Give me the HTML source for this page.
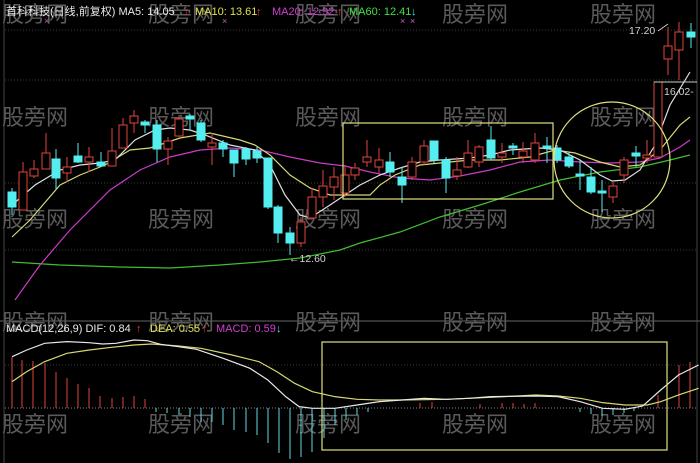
<!DOCTYPE html>
<html><head><meta charset="utf-8"><style>
html,body{margin:0;padding:0;background:#000;width:700px;height:463px;overflow:hidden}
svg{display:block}
text{font-family:"Liberation Sans","Noto Sans CJK SC",sans-serif}
.wm{fill:#5a5a5a;font-size:22px;font-family:"Noto Sans CJK SC","WenQuanYi Zen Hei",sans-serif}
.r{stroke:#e5433b;fill:#000;stroke-width:1}
.c{stroke:#55eef0;fill:#55eef0;stroke-width:1}
</style></head><body>
<svg width="700" height="463" viewBox="0 0 700 463" xmlns="http://www.w3.org/2000/svg">
<rect width="700" height="463" fill="#000"/>
<!-- grid -->
<g stroke="#3a3a3a" stroke-dasharray="1,2" stroke-width="1">
<line x1="5" y1="30" x2="697" y2="30"/><line x1="5" y1="80" x2="697" y2="80"/>
<line x1="5" y1="183" x2="697" y2="183"/><line x1="5" y1="250" x2="697" y2="250"/>
<line x1="5" y1="365" x2="697" y2="365"/>
</g>
<line x1="0" y1="321" x2="700" y2="321" stroke="#666"/>
<line x1="4" y1="0" x2="4" y2="463" stroke="#444"/>
<line x1="697" y1="0" x2="697" y2="463" stroke="#444"/>
<line x1="5" y1="408" x2="697" y2="408" stroke="#888" stroke-dasharray="1,2"/>
<!-- watermarks -->
<g class="wm">
<text x="2" y="22">股旁网</text><text x="148" y="22">股旁网</text><text x="295" y="22">股旁网</text><text x="442" y="22">股旁网</text><text x="590" y="22">股旁网</text>
<text x="2" y="125">股旁网</text><text x="148" y="125">股旁网</text><text x="295" y="125">股旁网</text><text x="442" y="125">股旁网</text><text x="590" y="125">股旁网</text>
<text x="2" y="227">股旁网</text><text x="148" y="227">股旁网</text><text x="295" y="227">股旁网</text><text x="442" y="227">股旁网</text><text x="590" y="227">股旁网</text>
<text x="2" y="330">股旁网</text><text x="148" y="330">股旁网</text><text x="295" y="330">股旁网</text><text x="442" y="330">股旁网</text><text x="590" y="330">股旁网</text>
<text x="2" y="432">股旁网</text><text x="148" y="432">股旁网</text><text x="295" y="432">股旁网</text><text x="442" y="432">股旁网</text><text x="590" y="432">股旁网</text>
</g>
<!-- MA lines -->
<g fill="none" stroke-width="1.2">
<polyline stroke="#3fbf2f" points="12,262 60,265 120,267 170,268 220,265 260,262 300,258 340,250 360,243 400,232 440,217 480,205 520,192 560,180 600,172 640,167 670,160 690,155"/>
<polyline stroke="#c83cc8" points="15,300 40,265 70,230 110,190 140,170 170,157 200,150 230,148 260,150 290,157 320,163 345,166 370,172 400,178 430,180 460,176 490,170 520,162 550,160 580,162 610,163 640,162 660,158 680,147 690,140"/>
<polyline stroke="#d8d870" points="12,237 30,220 60,185 80,175 105,165 130,150 150,148 180,138 210,133 240,140 255,145 270,155 290,175 310,188 330,195 370,195 380,185 395,175 420,165 440,163 470,160 500,160 530,157 555,150 575,153 600,162 620,167 640,165 660,150 680,125 690,117"/>
<polyline stroke="#e0e0e0" points="12,205 35,185 60,170 80,165 100,163 115,160 135,140 155,130 170,128 190,130 205,135 230,145 255,150 270,165 285,195 300,215 310,218 330,205 345,195 360,185 380,175 400,168 420,162 440,160 470,158 490,155 510,150 540,148 560,150 580,160 600,175 612,181 625,180 640,170 655,145 670,105 690,72"/>
</g>
<!-- candles -->
<g>
<line class="c" x1="12" y1="188" x2="12" y2="215"/><rect class="c" x="8" y="192" width="8" height="15"/>
<line class="r" x1="23" y1="162" x2="23" y2="210"/><rect class="r" x="19" y="172" width="8" height="38"/>
<line class="r" x1="34" y1="160" x2="34" y2="178"/><rect class="r" x="30" y="169" width="8" height="7"/>
<line class="r" x1="46" y1="133" x2="46" y2="169"/><rect class="r" x="42" y="153" width="8" height="16"/>
<line class="c" x1="56" y1="149" x2="56" y2="190"/><rect class="c" x="52" y="159" width="8" height="19"/>
<line class="r" x1="67" y1="157" x2="67" y2="182"/><rect class="r" x="63" y="167" width="8" height="6"/>
<line class="c" x1="78" y1="143" x2="78" y2="163"/><rect class="c" x="74" y="156" width="8" height="6"/>
<line class="r" x1="89" y1="147" x2="89" y2="172"/><rect class="r" x="85" y="157" width="8" height="5"/>
<line class="c" x1="101" y1="152" x2="101" y2="167"/><rect class="c" x="97" y="162" width="8" height="4"/>
<line class="r" x1="112" y1="128" x2="112" y2="166"/><rect class="r" x="108" y="151" width="8" height="15"/>
<line class="r" x1="123" y1="118" x2="123" y2="148"/><rect class="r" x="119" y="125" width="8" height="23"/>
<line class="r" x1="134" y1="110" x2="134" y2="133"/><rect class="r" x="130" y="116" width="8" height="7"/>
<line class="c" x1="145" y1="120" x2="145" y2="133"/><rect class="c" x="141" y="122" width="8" height="3"/>
<line class="c" x1="157" y1="120" x2="157" y2="162"/><rect class="c" x="153" y="125" width="8" height="24"/>
<line class="r" x1="168" y1="137" x2="168" y2="165"/><rect class="r" x="164" y="141" width="8" height="8"/>
<line class="r" x1="179" y1="115" x2="179" y2="137"/><rect class="r" x="175" y="119" width="8" height="17"/>
<line class="c" x1="190" y1="114" x2="190" y2="130"/><rect class="c" x="186" y="116" width="8" height="3"/>
<line class="c" x1="201" y1="120" x2="201" y2="142"/><rect class="c" x="197" y="123" width="8" height="17"/>
<line class="r" x1="212" y1="133" x2="212" y2="165"/><rect class="r" x="208" y="143" width="8" height="4"/>
<line class="c" x1="223" y1="140" x2="223" y2="157"/><rect class="c" x="219" y="143" width="8" height="6"/>
<line class="c" x1="234" y1="150" x2="234" y2="177"/><rect class="c" x="230" y="150" width="8" height="13"/>
<line class="c" x1="246" y1="147" x2="246" y2="165"/><rect class="c" x="242" y="149" width="8" height="10"/>
<line class="c" x1="257" y1="147" x2="257" y2="163"/><rect class="c" x="253" y="151" width="8" height="7"/>
<line class="c" x1="268" y1="158" x2="268" y2="209"/><rect class="c" x="264" y="158" width="8" height="49"/>
<line class="c" x1="278" y1="205" x2="278" y2="243"/><rect class="c" x="274" y="207" width="8" height="26"/>
<line class="c" x1="290" y1="227" x2="290" y2="255"/><rect class="c" x="286" y="233" width="8" height="10"/>
<line class="r" x1="301" y1="217" x2="301" y2="247"/><rect class="r" x="297" y="222" width="8" height="21"/>
<line class="r" x1="312" y1="188" x2="312" y2="218"/><rect class="r" x="308" y="197" width="8" height="21"/>
<line class="r" x1="323" y1="170" x2="323" y2="207"/><rect class="r" x="319" y="186" width="8" height="11"/>
<line class="r" x1="334" y1="167" x2="334" y2="200"/><rect class="r" x="330" y="177" width="8" height="10"/>
<line class="r" x1="345" y1="165" x2="345" y2="197"/><rect class="r" x="341" y="175" width="8" height="18"/>
<line class="r" x1="355" y1="163" x2="355" y2="180"/><rect class="r" x="351" y="168" width="8" height="7"/>
<line class="r" x1="367" y1="140" x2="367" y2="167"/><rect class="r" x="363" y="157" width="8" height="5"/>
<line class="r" x1="379" y1="148" x2="379" y2="173"/><rect class="r" x="375" y="160" width="8" height="7"/>
<line class="c" x1="390" y1="152" x2="390" y2="177"/><rect class="c" x="386" y="162" width="8" height="10"/>
<line class="c" x1="402" y1="167" x2="402" y2="203"/><rect class="c" x="398" y="177" width="8" height="8"/>
<line class="r" x1="412" y1="157" x2="412" y2="180"/><rect class="r" x="408" y="162" width="8" height="15"/>
<line class="r" x1="424" y1="140" x2="424" y2="165"/><rect class="r" x="420" y="146" width="8" height="16"/>
<line class="c" x1="434" y1="141" x2="434" y2="163"/><rect class="c" x="430" y="141" width="8" height="19"/>
<line class="c" x1="446" y1="157" x2="446" y2="193"/><rect class="c" x="442" y="160" width="8" height="18"/>
<line class="r" x1="457" y1="157" x2="457" y2="180"/><rect class="r" x="453" y="170" width="8" height="6"/>
<line class="r" x1="468" y1="140" x2="468" y2="168"/><rect class="r" x="464" y="153" width="8" height="14"/>
<line class="r" x1="479" y1="145" x2="479" y2="167"/><rect class="r" x="475" y="147" width="8" height="15"/>
<line class="c" x1="491" y1="126" x2="491" y2="160"/><rect class="c" x="487" y="140" width="8" height="18"/>
<line class="r" x1="502" y1="143" x2="502" y2="163"/><rect class="r" x="498" y="153" width="8" height="4"/>
<line class="c" x1="513" y1="143" x2="513" y2="155"/><rect class="c" x="509" y="146" width="8" height="2"/>
<line class="r" x1="523" y1="142" x2="523" y2="163"/><rect class="r" x="519" y="151" width="8" height="6"/>
<line class="r" x1="535" y1="133" x2="535" y2="163"/><rect class="r" x="531" y="143" width="8" height="17"/>
<line class="c" x1="547" y1="137" x2="547" y2="163"/><rect class="c" x="543" y="146" width="8" height="2"/>
<line class="c" x1="557" y1="145" x2="557" y2="163"/><rect class="c" x="553" y="148" width="8" height="12"/>
<line class="c" x1="569" y1="152" x2="569" y2="168"/><rect class="c" x="565" y="157" width="8" height="9"/>
<line class="c" x1="580" y1="160" x2="580" y2="190"/><rect class="c" x="576" y="174" width="8" height="2"/>
<line class="c" x1="591" y1="167" x2="591" y2="194"/><rect class="c" x="587" y="177" width="8" height="15"/>
<line class="c" x1="602" y1="180" x2="602" y2="212"/><rect class="c" x="598" y="191" width="8" height="2"/>
<line class="r" x1="613" y1="182" x2="613" y2="203"/><rect class="r" x="609" y="186" width="8" height="11"/>
<line class="r" x1="624" y1="157" x2="624" y2="183"/><rect class="r" x="620" y="160" width="8" height="15"/>
<line class="c" x1="636" y1="146" x2="636" y2="167"/><rect class="c" x="632" y="153" width="8" height="3"/>
<line class="r" x1="647" y1="140" x2="647" y2="163"/><rect class="r" x="643" y="155" width="8" height="3"/>
<line class="r" x1="658" y1="82" x2="658" y2="157"/><rect class="r" x="654" y="82" width="8" height="75"/>
<line class="r" x1="668" y1="27" x2="668" y2="75"/><rect class="r" x="664" y="46" width="8" height="13"/>
<line class="r" x1="679" y1="22" x2="679" y2="80"/><rect class="r" x="675" y="32" width="8" height="18"/>
<line class="c" x1="691" y1="23" x2="691" y2="48"/><rect class="c" x="687" y="32" width="8" height="5"/>
</g>
<!-- annotations -->
<rect x="343" y="123" width="210" height="76" fill="none" stroke="#e0e080" stroke-width="1.2"/>
<circle cx="612" cy="160" r="58" fill="none" stroke="#e0e080" stroke-width="1.2"/>
<g font-size="10.5" fill="#d0d0d0">
<text x="629" y="34">17.20</text><line x1="658" y1="31" x2="668" y2="24" stroke="#ccc"/>
<text x="664" y="95">16.02-</text><line x1="654" y1="82" x2="697" y2="82" stroke="#ccc"/>
<text x="289" y="262">←12.60</text>
</g>
<g fill="#c060c0" font-size="9">
<text x="44" y="24">×</text><text x="222" y="24">×</text><text x="400" y="24">×</text><text x="410" y="24">×</text>
</g>
<!-- header -->
<g font-size="11">
<text x="6" y="15" fill="#e8e8e8">首科科技(日线,前复权)  MA5: 14.05</text>
<text x="184" y="15" fill="#ff3030">↑</text>
<text x="195" y="15" fill="#e0e050">MA10: 13.61</text>
<text x="256" y="15" fill="#ff3030">↑</text>
<text x="272" y="15" fill="#d040d0">MA20: 12.92</text>
<text x="337" y="15" fill="#ff3030">↑</text>
<text x="349" y="15" fill="#40e040">MA60: 12.41</text>
<text x="411" y="15" fill="#50e0f0">↓</text>
</g>
<!-- MACD header -->
<g font-size="11">
<text x="6" y="332" fill="#e8e8e8">MACD(12,26,9)  DIF: 0.84</text>
<text x="136" y="332" fill="#ff3030">↑</text>
<text x="150" y="332" fill="#e0e050">DEA: 0.55</text>
<text x="202" y="332" fill="#ff3030">↑</text>
<text x="216" y="332" fill="#d040d0">MACD: 0.59</text>
<text x="276" y="332" fill="#50e0f0">↓</text>
</g>
<!-- histogram -->
<g stroke="#e5433b" stroke-width="1">
<line x1="12" y1="408" x2="12" y2="357"/><line x1="22" y1="408" x2="22" y2="360"/><line x1="33" y1="408" x2="33" y2="361"/><line x1="45" y1="408" x2="45" y2="363"/><line x1="56" y1="408" x2="56" y2="372"/><line x1="67" y1="408" x2="67" y2="378"/><line x1="78" y1="408" x2="78" y2="384"/><line x1="89" y1="408" x2="89" y2="388"/><line x1="100" y1="408" x2="100" y2="396"/><line x1="112" y1="408" x2="112" y2="398"/><line x1="123" y1="408" x2="123" y2="397"/><line x1="134" y1="408" x2="134" y2="396"/><line x1="145" y1="408" x2="145" y2="399"/>
<line x1="420" y1="408" x2="420" y2="403"/><line x1="432" y1="408" x2="432" y2="402"/><line x1="480" y1="408" x2="480" y2="404"/><line x1="502" y1="408" x2="502" y2="403"/><line x1="513" y1="408" x2="513" y2="403"/><line x1="524" y1="408" x2="524" y2="404"/><line x1="535" y1="408" x2="535" y2="403"/>
<line x1="658" y1="408" x2="658" y2="395"/><line x1="667" y1="408" x2="667" y2="377"/><line x1="679" y1="408" x2="679" y2="365"/><line x1="690" y1="408" x2="690" y2="362"/>
</g>
<g stroke="#60d8e0" stroke-width="1">
<line x1="156" y1="408" x2="156" y2="412"/><line x1="167" y1="408" x2="167" y2="413"/><line x1="179" y1="408" x2="179" y2="415"/><line x1="190" y1="408" x2="190" y2="417"/><line x1="201" y1="408" x2="201" y2="422"/><line x1="212" y1="408" x2="212" y2="422"/><line x1="223" y1="408" x2="223" y2="425"/><line x1="234" y1="408" x2="234" y2="430"/><line x1="246" y1="408" x2="246" y2="432"/><line x1="257" y1="408" x2="257" y2="435"/><line x1="268" y1="408" x2="268" y2="443"/><line x1="279" y1="408" x2="279" y2="453"/><line x1="290" y1="408" x2="290" y2="459"/><line x1="301" y1="408" x2="301" y2="457"/><line x1="312" y1="408" x2="312" y2="452"/><line x1="324" y1="408" x2="324" y2="438"/><line x1="335" y1="408" x2="335" y2="425"/><line x1="346" y1="408" x2="346" y2="420"/><line x1="357" y1="408" x2="357" y2="415"/><line x1="368" y1="408" x2="368" y2="412"/>
<line x1="580" y1="408" x2="580" y2="412"/><line x1="591" y1="408" x2="591" y2="414"/><line x1="602" y1="408" x2="602" y2="416"/><line x1="613" y1="408" x2="613" y2="415"/><line x1="624" y1="408" x2="624" y2="413"/><line x1="634" y1="408" x2="634" y2="411"/>
</g>
<!-- DIF / DEA -->
<g transform="translate(0,300) scale(0.4464,0.3333)" fill="none">
<polyline vector-effect="non-scaling-stroke" stroke="#d8d870" stroke-width="1.2" points="27,245 60,215 100,185 150,160 200,150 250,142 300,135 340,132 400,138 450,145 520,165 580,185 620,215 660,250 700,275 750,290 800,298 850,300 900,300 1000,298 1100,292 1200,285 1250,288 1300,295 1350,308 1400,315 1450,315 1480,305 1520,285 1565,265"/>
<polyline vector-effect="non-scaling-stroke" stroke="#e8e8e8" stroke-width="1.2" points="27,170 60,150 100,130 150,125 200,128 230,132 260,130 300,120 330,122 360,133 400,140 440,148 500,175 560,205 600,240 640,290 670,320 700,325 750,325 800,315 850,305 900,300 950,295 1000,298 1050,295 1100,290 1200,288 1250,290 1300,305 1350,325 1400,328 1440,318 1480,270 1520,225 1565,195"/>
</g>
<rect x="322" y="342" width="345" height="108" fill="none" stroke="#e0e080" stroke-width="1.2"/>
</svg>
</body></html>
